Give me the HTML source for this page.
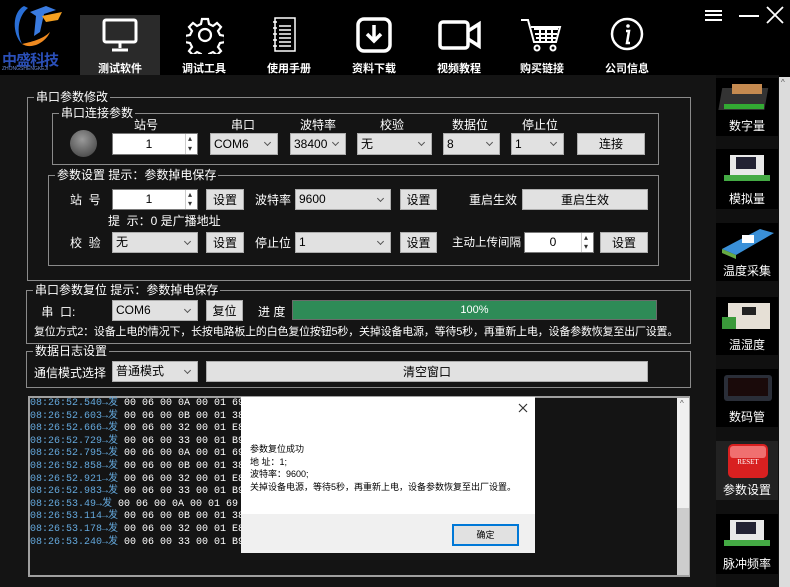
<!DOCTYPE html>
<html><head><meta charset="utf-8">
<style>
*{margin:0;padding:0;box-sizing:border-box}
body{width:790px;height:587px;background:#000;position:relative;overflow:hidden;font-family:"Liberation Sans","Noto Sans CJK SC",sans-serif;font-size:12px;color:#fff}
.a{position:absolute}
.grp{position:absolute;border:1px solid #8a8a8a}
.gt{position:absolute;top:-8px;left:6px;background:#141414;padding:0 2px;font-size:12px;line-height:14px;color:#fff}
.lbl{position:absolute;font-size:12px;line-height:14px;color:#fff}
.in{position:absolute;background:#fff;color:#000;font-size:12px;border:1px solid #7a7a7a}
.cb{position:absolute;background:#e1e1e1;color:#000;border:1px solid #adadad;font-size:12px;padding-left:3px;line-height:20px}
.cb:after{content:"";position:absolute;right:7px;top:6px;width:4px;height:4px;border-right:1px solid #555;border-bottom:1px solid #555;transform:rotate(45deg)}
.bt{position:absolute;background:#e1e1e1;color:#000;border:1px solid #adadad;font-size:12px;text-align:center;line-height:20px}
.sp{position:absolute;right:0;top:0;width:12px;height:100%;border-left:1px solid #ccc}
.sp:before{content:"▴";position:absolute;top:0;left:2px;font-size:8px;line-height:10px;color:#333}
.sp:after{content:"▾";position:absolute;bottom:0;left:2px;font-size:8px;line-height:10px;color:#333}
.nav{position:absolute;top:68px;transform:translate(-50%,-50%);font-size:11px;font-weight:bold;color:#fff;white-space:nowrap}
.card{position:absolute;left:716px;width:62px;background:#000;overflow:hidden}
.card svg{position:absolute;left:0;top:0}
.card span{position:absolute;left:0;bottom:3px;width:62px;text-align:center;font-size:12px;line-height:14px;color:#fff}
.log{font-family:"Liberation Mono","Noto Sans CJK SC",monospace;font-size:10px;line-height:12.6px;white-space:pre}
.log b{font-weight:normal;color:#64a8dc}
</style></head><body>
<div class="a" style="left:0;top:0;width:790px;height:75px;background:#000"></div>
<svg class="a" style="left:6px;top:2px" width="62" height="48" viewBox="0 0 62 48">
<path d="M18 4 C6 10 6 32 16 42 C10 30 12 14 22 6Z" fill="#2a6fd6"/>
<path d="M16 42 C26 48 40 40 44 30 C36 38 24 40 16 42Z" fill="#f08a20"/>
<path d="M24 10 L40 4 L50 8 L38 12 L34 30 L28 34 L30 14Z" fill="#3a7be0"/>
<path d="M36 14 L56 10 L52 18 L40 20Z" fill="#f5a020"/>
</svg>
<div class="a" style="left:2px;top:49px;font-size:15px;font-weight:bold;color:#2a4fb8;letter-spacing:-1px">中盛科技</div>
<div class="a" style="left:2px;top:66px;font-size:5px;color:#6a8ad8">ZHONGSHENGKEJI</div>
<div class="a" style="left:80px;top:15px;width:80px;height:60px;background:#2a2a2a"></div>
<svg class="a" style="left:102px;top:17px" width="36" height="36" viewBox="0 0 36 36" fill="none" stroke="#fff" stroke-width="3"><rect x="2" y="3" width="32" height="22" rx="2"/><path d="M18 25v6M10 33h16"/></svg>
<svg class="a" style="left:186px;top:16px" width="38" height="38" viewBox="0 0 38 38" fill="none" stroke="#fff" stroke-width="2.2"><path d="M16 3h6l1 5 4 2 4-3 4 4-3 4 2 4 5 1v6l-5 1-2 4 3 4-4 4-4-3-4 2-1 5h-6l-1-5-4-2-4 3-4-4 3-4-2-4-5-1v-6l5-1 2-4-3-4 4-4 4 3 4-2z"/><circle cx="19" cy="19" r="6"/></svg>
<svg class="a" style="left:272px;top:16px" width="26" height="38" viewBox="0 0 26 38" fill="none" stroke="#fff" stroke-width="1.5"><rect x="3" y="2" width="20" height="33"/><path d="M7 10h12M7 14h12M7 18h12M7 22h12M7 26h12M7 30h12"/><path d="M1 6h4M1 12h4M1 18h4M1 24h4M1 30h4"/></svg>
<svg class="a" style="left:356px;top:17px" width="36" height="36" viewBox="0 0 36 36" fill="none" stroke="#fff" stroke-width="3.5"><rect x="2" y="2" width="32" height="32" rx="6"/><path d="M18 8v16M11 17l7 7 7-7"/></svg>
<svg class="a" style="left:438px;top:20px" width="44" height="30" viewBox="0 0 44 30" fill="none" stroke="#fff" stroke-width="3.5"><rect x="2" y="2" width="28" height="26" rx="3"/><path d="M30 11l11-7v22l-11-7"/></svg>
<svg class="a" style="left:520px;top:17px" width="42" height="36" viewBox="0 0 42 36" fill="none" stroke="#fff" stroke-width="2"><path d="M1 3h7l6 22h22l4-15H11"/><path d="M14 12h24M15 17h22M16 21h20M20 10v15M26 10v15M32 10v15"/><circle cx="17" cy="31" r="2.5"/><circle cx="33" cy="31" r="2.5"/></svg>
<svg class="a" style="left:609px;top:16px" width="36" height="36" viewBox="0 0 36 36" fill="none" stroke="#fff" stroke-width="2.5"><circle cx="18" cy="18" r="15"/><circle cx="19" cy="10" r="1.8" fill="#fff" stroke="none"/><path d="M17 15h3l-2 12h3" stroke-width="2.5"/></svg>
<div class="nav" style="left:120px">测试软件</div>
<div class="nav" style="left:204px">调试工具</div>
<div class="nav" style="left:289px">使用手册</div>
<div class="nav" style="left:374px">资料下载</div>
<div class="nav" style="left:459px">视频教程</div>
<div class="nav" style="left:542px">购买链接</div>
<div class="nav" style="left:627px">公司信息</div>
<div class="a" style="left:705px;top:10px;width:17px;height:11px;border-top:2px solid #fff;border-bottom:2px solid #fff"></div>
<div class="a" style="left:705px;top:14px;width:17px;height:2px;background:#fff"></div>
<div class="a" style="left:739px;top:15px;width:20px;height:2px;background:#fff"></div>
<svg class="a" style="left:766px;top:6px" width="18" height="18"><path d="M1 1L17 17M17 1L1 17" stroke="#fff" stroke-width="1.8"/></svg>

<div class="a" style="left:0;top:75px;width:716px;height:512px;background:#141414"></div>
<div class="a" style="left:716px;top:75px;width:63px;height:512px;background:#101010"></div>
<div class="a" style="left:779px;top:77px;width:11px;height:510px;background:#dcdcdc"></div>
<div class="a" style="left:781px;top:78px;font-size:8px;color:#555">^</div>

<div class="grp" style="left:27px;top:97px;width:664px;height:184px"><div class="gt">串口参数修改</div></div>
<div class="grp" style="left:52px;top:113px;width:607px;height:52px"><div class="gt">串口连接参数</div></div>
<div class="lbl" style="left:134px;top:118px">站号</div>
<div class="lbl" style="left:231px;top:118px">串口</div>
<div class="lbl" style="left:300px;top:118px">波特率</div>
<div class="lbl" style="left:380px;top:118px">校验</div>
<div class="lbl" style="left:452px;top:118px">数据位</div>
<div class="lbl" style="left:522px;top:118px">停止位</div>
<div class="a" style="left:70px;top:130px;width:27px;height:27px;border-radius:50%;background:radial-gradient(circle at 45% 35%,#9a9a9a,#555 70%,#333)"></div>
<div class="in" style="left:112px;top:133px;width:86px;height:22px;text-align:center;line-height:20px;padding-right:12px">1<div class="sp"></div></div>
<div class="cb" style="left:210px;top:133px;width:68px;height:22px">COM6</div>
<div class="cb" style="left:290px;top:133px;width:56px;height:22px">38400</div>
<div class="cb" style="left:357px;top:133px;width:75px;height:22px">无</div>
<div class="cb" style="left:443px;top:133px;width:57px;height:22px">8</div>
<div class="cb" style="left:511px;top:133px;width:53px;height:22px">1</div>
<div class="bt" style="left:577px;top:133px;width:68px;height:22px">连接</div>

<div class="grp" style="left:48px;top:175px;width:611px;height:91px"><div class="gt">参数设置 提示：参数掉电保存</div></div>
<div class="lbl" style="left:70px;top:193px">站&nbsp;&nbsp;号</div>
<div class="in" style="left:112px;top:189px;width:86px;height:21px;text-align:center;line-height:19px;padding-right:12px">1<div class="sp"></div></div>
<div class="bt" style="left:206px;top:189px;width:38px;height:21px">设置</div>
<div class="lbl" style="left:255px;top:193px">波特率</div>
<div class="cb" style="left:295px;top:189px;width:96px;height:21px;line-height:19px">9600</div>
<div class="bt" style="left:400px;top:189px;width:37px;height:21px">设置</div>
<div class="lbl" style="left:469px;top:193px">重启生效</div>
<div class="bt" style="left:522px;top:189px;width:126px;height:21px">重启生效</div>
<div class="lbl" style="left:108px;top:214px">提&nbsp;&nbsp;示：0 是广播地址</div>
<div class="lbl" style="left:70px;top:236px">校&nbsp;&nbsp;验</div>
<div class="cb" style="left:112px;top:232px;width:86px;height:21px;line-height:19px">无</div>
<div class="bt" style="left:206px;top:232px;width:38px;height:21px">设置</div>
<div class="lbl" style="left:255px;top:236px">停止位</div>
<div class="cb" style="left:295px;top:232px;width:96px;height:21px;line-height:19px">1</div>
<div class="bt" style="left:400px;top:232px;width:37px;height:21px">设置</div>
<div class="lbl" style="left:452px;top:236px;font-size:11.5px">主动上传间隔</div>
<div class="in" style="left:524px;top:232px;width:70px;height:21px;text-align:center;line-height:19px;padding-right:12px">0<div class="sp"></div></div>
<div class="bt" style="left:600px;top:232px;width:48px;height:21px">设置</div>

<div class="grp" style="left:26px;top:290px;width:665px;height:54px"><div class="gt">串口参数复位 提示：参数掉电保存</div></div>
<div class="lbl" style="left:38px;top:305px">&nbsp;串&nbsp;&nbsp;口:</div>
<div class="cb" style="left:112px;top:300px;width:86px;height:21px;line-height:19px">COM6</div>
<div class="bt" style="left:206px;top:300px;width:37px;height:21px">复位</div>
<div class="lbl" style="left:258px;top:305px">进&nbsp;度</div>
<div class="a" style="left:292px;top:300px;width:365px;height:20px;background:#2e8b57;border:1px solid #6a6a6a;text-align:center;line-height:18px;font-size:11px">100%</div>
<div class="lbl" style="left:34px;top:325px;font-size:11px;letter-spacing:-0.2px;white-space:nowrap">复位方式2：设备上电的情况下，长按电路板上的白色复位按钮5秒，关掉设备电源，等待5秒，再重新上电，设备参数恢复至出厂设置。</div>

<div class="grp" style="left:26px;top:351px;width:665px;height:37px"><div class="gt">数据日志设置</div></div>
<div class="lbl" style="left:34px;top:366px">通信模式选择</div>
<div class="cb" style="left:112px;top:361px;width:86px;height:21px;line-height:19px">普通模式</div>
<div class="bt" style="left:206px;top:361px;width:442px;height:21px">清空窗口</div>

<div class="a" style="left:28px;top:396px;width:662px;height:181px;border:2px solid #a0a0a0;background:#141414"></div>
<div class="a" style="left:677px;top:398px;width:12px;height:177px;background:#f0f0f0"></div>
<div class="a" style="left:677px;top:508px;width:12px;height:67px;background:#cdcdcd"></div>
<div class="a" style="left:680px;top:399px;font-size:8px;color:#555">^</div>
<div class="a log" style="left:30px;top:398px"><b>08:26:52.540→发</b> 00 06 00 0A 00 01 69 D9
<b>08:26:52.603→发</b> 00 06 00 0B 00 01 38 19
<b>08:26:52.666→发</b> 00 06 00 32 00 01 E8 14
<b>08:26:52.729→发</b> 00 06 00 33 00 01 B9 D4
<b>08:26:52.795→发</b> 00 06 00 0A 00 01 69 D9
<b>08:26:52.858→发</b> 00 06 00 0B 00 01 38 19
<b>08:26:52.921→发</b> 00 06 00 32 00 01 E8 14
<b>08:26:52.983→发</b> 00 06 00 33 00 01 B9 D4
<b>08:26:53.49→发</b> 00 06 00 0A 00 01 69 D9
<b>08:26:53.114→发</b> 00 06 00 0B 00 01 38 19
<b>08:26:53.178→发</b> 00 06 00 32 00 01 E8 14
<b>08:26:53.240→发</b> 00 06 00 33 00 01 B9 D4</div>

<div class="a" style="left:241px;top:397px;width:294px;height:156px;background:#fff"></div>
<div class="a" style="left:241px;top:514px;width:294px;height:39px;background:#f0f0f0"></div>
<svg class="a" style="left:518px;top:403px" width="10" height="10"><path d="M1 1L9 9M9 1L1 9" stroke="#333" stroke-width="1.2"/></svg>
<div class="a" style="left:250px;top:443px;font-size:9px;line-height:12.5px;color:#000">参数复位成功<br>地&nbsp;址：1;<br>波特率：9600;<br>关掉设备电源，等待5秒，再重新上电，设备参数恢复至出厂设置。</div>
<div class="a" style="left:452px;top:524px;width:67px;height:22px;border:2px solid #0078d7;background:#e1e1e1;color:#000;font-size:9px;text-align:center;line-height:18px">确定</div>

<div class="card" style="top:78px;height:58px"><svg width="62" height="42"><rect x="8" y="10" width="46" height="22" fill="#333" transform="skewX(-10)"/><rect x="16" y="6" width="30" height="10" fill="#c58a50"/><rect x="8" y="26" width="40" height="5" fill="#3a3"/></svg><span>数字量</span></div>
<div class="card" style="top:149px;height:60px"><svg width="62" height="42"><rect x="14" y="6" width="34" height="26" fill="#e8e8e8"/><rect x="20" y="8" width="20" height="12" fill="#223"/><rect x="8" y="26" width="46" height="6" fill="#4a4"/></svg><span>模拟量</span></div>
<div class="card" style="top:223px;height:58px"><svg width="62" height="42"><path d="M6 26L44 6L58 10L20 32Z" fill="#3a90d8"/><rect x="26" y="12" width="12" height="8" fill="#fff"/><path d="M6 26L20 32L20 36L6 30Z" fill="#6a4"/></svg><span>温度采集</span></div>
<div class="card" style="top:297px;height:58px"><svg width="62" height="42"><rect x="12" y="6" width="42" height="26" fill="#e6e0d6"/><rect x="26" y="10" width="14" height="8" fill="#222"/><rect x="6" y="20" width="14" height="12" fill="#3a9a3a"/></svg><span>温湿度</span></div>
<div class="card" style="top:369px;height:58px"><svg width="62" height="42"><rect x="8" y="6" width="48" height="26" rx="3" fill="#2a2e38"/><rect x="12" y="9" width="40" height="18" fill="#1a0a0a"/></svg><span>数码管</span></div>
<div class="card" style="top:441px;height:59px;background:#222"><svg width="62" height="42"><rect x="12" y="3" width="40" height="34" rx="5" fill="#d82020"/><rect x="14" y="5" width="36" height="12" rx="3" fill="#f07070"/><text x="32" y="23" font-size="7" fill="#fff" text-anchor="middle" font-family="Liberation Serif">RESET</text></svg><span>参数设置</span></div>
<div class="card" style="top:514px;height:60px"><svg width="62" height="42"><rect x="14" y="6" width="34" height="26" fill="#e8e8e8"/><rect x="20" y="8" width="20" height="12" fill="#223"/><rect x="8" y="26" width="46" height="6" fill="#4a4"/></svg><span>脉冲频率</span></div>
</body></html>
